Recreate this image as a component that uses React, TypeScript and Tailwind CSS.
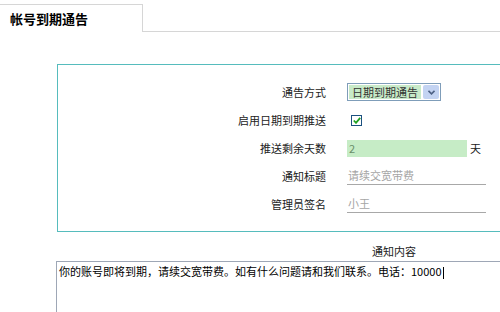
import React from "react";

const font = { fontFamily: '"Noto Sans CJK SC", "Liberation Sans", sans-serif' };

function Row({ label, children }: { label: string; children: React.ReactNode }) {
  return (
    <div className="flex h-[28px] items-center">
      <div className="w-[268px] shrink-0 text-right text-[11px] text-[#222]">{label}</div>
      <div className="ml-[21px] flex items-center">{children}</div>
    </div>
  );
}

export default function App() {
  return (
    <div className="h-[312px] w-[500px] overflow-hidden bg-white" style={font}>
      <div className="flex h-[32px] items-end">
        <div className="flex h-[28px] w-[143px] items-center border-r border-t border-[#d6d6d6] pl-[10px] text-[13px] font-bold text-black">
          帐号到期通告
        </div>
        <div className="h-full flex-1 border-b border-[#d6d6d6]" />
      </div>

      <div className="ml-[57px] mt-[32px] h-[168px] w-[460px] border border-[#56bcbd] pt-[13px]">
        <Row label="通告方式">
          <div className="flex h-[18px] w-[94px] items-center border border-[#7f9db9] bg-white p-[1px]">
            <div className="flex h-full flex-1 items-center bg-[#c8eac8] pl-[3px] text-[11px] text-[#333]">
              日期到期通告
            </div>
            <div className="ml-[2px] flex h-full w-[16px] items-center justify-center rounded-[2px] bg-[#c3d3f2]">
              <svg width="7" height="5" viewBox="0 0 7 5">
                <path d="M0.5 0.8 L3.5 3.8 L6.5 0.8" fill="none" stroke="#4d6185" strokeWidth="1.6" />
              </svg>
            </div>
          </div>
        </Row>
        <Row label="启用日期到期推送">
          <div className="ml-[4px] flex h-[11px] w-[11px] items-center justify-center border border-[#1c5180] bg-white">
            <svg width="8" height="7" viewBox="0 0 8 7">
              <path d="M0.8 3.5 L3 5.8 L7.2 0.8" fill="none" stroke="#21a121" strokeWidth="1.8" />
            </svg>
          </div>
        </Row>
        <Row label="推送剩余天数">
          <div className="flex h-[17px] w-[120px] items-center bg-[#c6ecc6] pl-[2px] text-[11px] text-[#6a8f6a]">2</div>
          <span className="ml-[3px] text-[11px] text-[#222]">天</span>
        </Row>
        <Row label="通知标题">
          <div className="flex h-[18px] w-[139px] items-center border-b border-[#a8a8a8] pl-[1px] text-[11px] text-[#a5a5a5]">
            请续交宽带费
          </div>
        </Row>
        <Row label="管理员签名">
          <div className="flex h-[18px] w-[139px] items-center border-b border-[#a8a8a8] pl-[1px] text-[11px] text-[#a5a5a5]">
            小王
          </div>
        </Row>
      </div>

      <div className="mt-[10px] flex h-[19px] items-center pl-[372px] text-[11px] text-[#222]">通知内容</div>

      <div className="ml-[56px] h-[80px] w-[460px] border border-[#9ea7b6] px-[2px] pt-[1px] text-[11px] leading-[16px] text-black">
        你的账号即将到期，请续交宽带费。如有什么问题请和我们联系。电话：10000
        <span className="ml-[1px] inline-block h-[12px] w-px bg-black align-middle" />
      </div>
    </div>
  );
}
